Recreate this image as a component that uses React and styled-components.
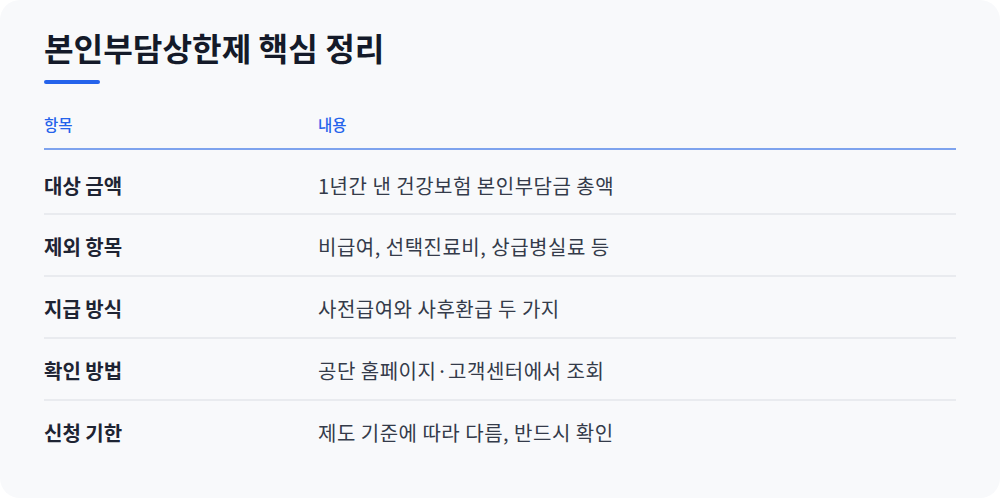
import React from "react";
import styled, { createGlobalStyle } from "styled-components";

const GlobalStyle = createGlobalStyle`
  html, body {
    margin: 0;
    padding: 0;
    background: #ffffff;
  }
  body {
    font-family: "Noto Sans CJK KR", "Noto Sans", sans-serif;
  }
`;

const Card = styled.section`
  box-sizing: border-box;
  width: 1000px;
  height: 498px;
  padding: 26px 44px 0;
  background: #f8f9fb;
  border-radius: 20px;
`;

const Title = styled.h1`
  margin: 0;
  font-size: 32.2px;
  line-height: 42px;
  font-weight: 700;
  color: #141a29;
`;

const TitleBar = styled.div`
  width: 56px;
  height: 4px;
  margin-top: 12px;
  border-radius: 2px;
  background: #2563eb;
`;

const Table = styled.div`
  margin-top: 30px;
  display: flex;
  flex-direction: column;
`;

const Row = styled.div`
  display: grid;
  grid-template-columns: 274px 1fr;
  align-items: center;
  border-bottom: 2px solid ${(p) => (p.$last ? "transparent" : "#e9ebef")};
  padding: ${(p) => (p.$first ? "23px 0 14px" : "19px 0 15px")};
`;

const HeadRow = styled.div`
  display: grid;
  grid-template-columns: 274px 1fr;
  padding-bottom: 14px;
  border-bottom: 2px solid #7ea3ee;
`;

const HeadCell = styled.div`
  font-size: 15.5px;
  line-height: 20px;
  font-weight: 500;
  color: #2563eb;
`;

const Label = styled.div`
  font-size: 20px;
  line-height: 26px;
  font-weight: 700;
  color: #1e2433;
`;

const Value = styled.div`
  font-size: 20px;
  line-height: 26px;
  font-weight: 400;
  letter-spacing: 0.5px;
  color: #343b4a;
`;

const rows = [
  ["대상 금액", "1년간 낸 건강보험 본인부담금 총액"],
  ["제외 항목", "비급여, 선택진료비, 상급병실료 등"],
  ["지급 방식", "사전급여와 사후환급 두 가지"],
  ["확인 방법", "공단 홈페이지·고객센터에서 조회"],
  ["신청 기한", "제도 기준에 따라 다름, 반드시 확인"],
];

export default function App() {
  return (
    <>
      <GlobalStyle />
      <Card>
        <Title>본인부담상한제 핵심 정리</Title>
        <TitleBar />
        <Table>
          <HeadRow>
            <HeadCell>항목</HeadCell>
            <HeadCell>내용</HeadCell>
          </HeadRow>
          {rows.map(([label, value], i) => (
            <Row key={label} $first={i === 0} $last={i === rows.length - 1}>
              <Label>{label}</Label>
              <Value>{value}</Value>
            </Row>
          ))}
        </Table>
      </Card>
    </>
  );
}
